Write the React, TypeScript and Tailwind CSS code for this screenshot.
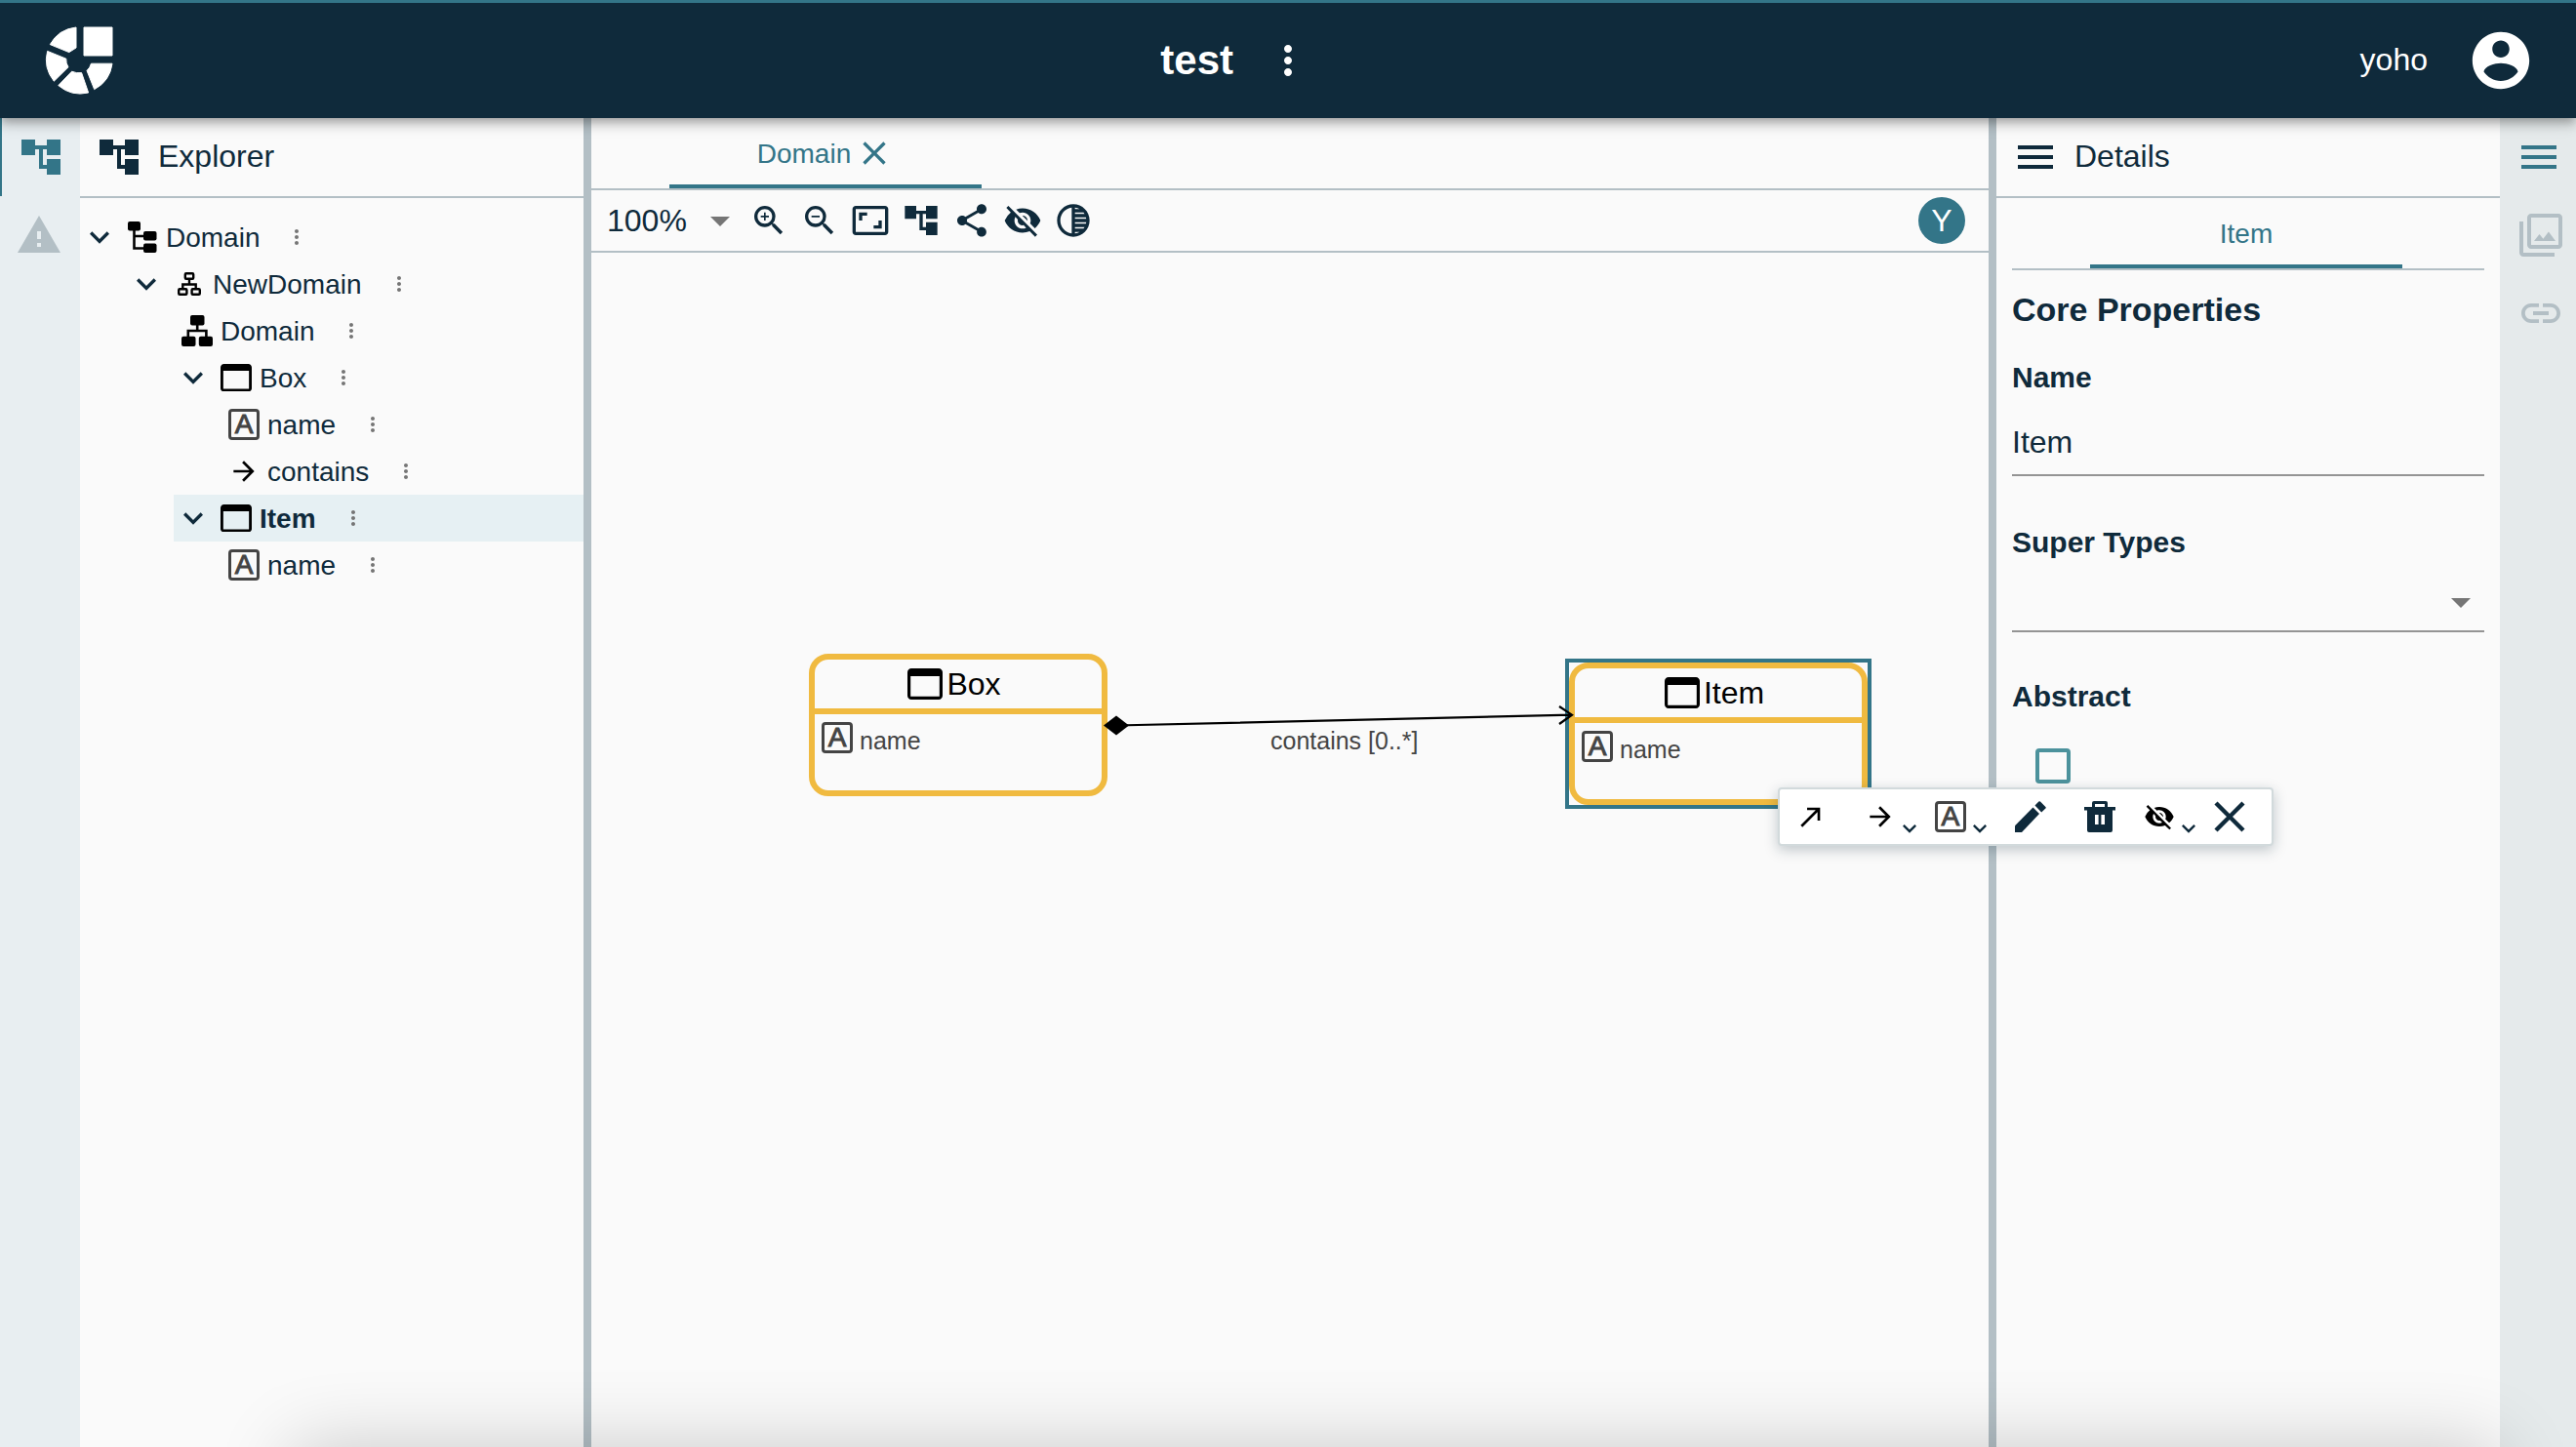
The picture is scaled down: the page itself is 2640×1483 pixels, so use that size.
import type { ReactNode } from "react";
import {
  MdAccountTree,
  MdArrowDropDown,
  MdArrowForward,
  MdAspectRatio,
  MdClose,
  MdExpandMore,
  MdLink,
  MdMenu,
  MdMoreVert,
  MdNorthEast,
  MdOutlineFilter,
  MdShare,
  MdTonality,
  MdVisibilityOff,
  MdWarning,
  MdZoomIn,
  MdZoomOut,
} from "react-icons/md";

function Logo() {
  return (
    <svg viewBox="0 0 70 70" className="size-[70px]" fill="#fff" stroke="#fff" strokeWidth="1" strokeLinejoin="round" aria-hidden="true">
      <path d="M40 1H69V30H40Z" />
      <path d="M32 1V22L24.8 26.6L5.3 18.6A35 35 0 0 1 32 1Z" />
      <path d="M2.6 25.4L21.8 33.2Q21.4 38 24 41.8L9.3 56.2A35 35 0 0 1 2.6 25.4Z" />
      <path d="M27.6 46.2Q32.4 48.4 37.6 47.6L44.6 68A35 35 0 0 1 13.8 60.6Z" />
      <path d="M47.4 38.2H69A35 35 0 0 1 50.7 64.6L43 45.4Q46.4 42.4 47.4 38.2Z" />
    </svg>
  );
}

function AccountIcon() {
  return (
    <svg viewBox="0 0 24 24" className="size-[70px]" fill="currentColor" aria-hidden="true">
      <path d="M12 2C6.48 2 2 6.48 2 12s4.48 10 10 10 10-4.48 10-10S17.52 2 12 2zm0 3c1.66 0 3 1.34 3 3s-1.34 3-3 3-3-1.34-3-3 1.34-3 3-3zm0 14.2c-2.5 0-4.71-1.28-6-3.22.03-1.99 4-3.08 6-3.08 1.99 0 5.97 1.09 6 3.08-1.29 1.94-3.5 3.22-6 3.22z" />
    </svg>
  );
}

function RootIcon() {
  return (
    <svg viewBox="0 0 32 32" className="size-8" aria-hidden="true">
      <rect x="1" y="0" width="13" height="9.5" rx="2" />
      <rect x="17" y="10" width="13.5" height="9.5" rx="2" />
      <rect x="17" y="22.5" width="13.5" height="9.5" rx="2" />
      <path d="M7.5 8V27.5H18M7.5 15H18" fill="none" stroke="#000" strokeWidth="2.6" />
    </svg>
  );
}

function ModelIcon() {
  return (
    <span className="flex size-8 items-center justify-center">
      <svg viewBox="0 0 24 24" className="size-6" fill="none" stroke="#000" strokeWidth="2.4" aria-hidden="true">
        <rect x="7.8" y="1.2" width="8.4" height="5.6" rx="1" />
        <rect x="1.2" y="17.2" width="8.2" height="5.6" rx="1" />
        <rect x="14.6" y="17.2" width="8.2" height="5.6" rx="1" />
        <path d="M12 7v5M5.3 17v-4.5h13.4V17" />
      </svg>
    </span>
  );
}

function DiagramIcon() {
  return (
    <svg viewBox="0 0 32 32" className="size-8" aria-hidden="true">
      <rect x="9" y="0" width="14.5" height="10.5" rx="2" />
      <rect x="0" y="21.8" width="14.5" height="10.2" rx="2" />
      <rect x="17.8" y="21.8" width="14.2" height="10.2" rx="2" />
      <path d="M16.2 10v6M6.8 22v-6h18.6v6" fill="none" stroke="#000" strokeWidth="2.6" />
    </svg>
  );
}

function EntityIcon({ className }: { className: string }) {
  return (
    <svg viewBox="3 4 18 16" className={className} aria-hidden="true">
      <path d="M19 4H5c-1.11 0-2 .9-2 2v12c0 1.1.89 2 2 2h14c1.1 0 2-.9 2-2V6c0-1.1-.9-2-2-2zm0 14.4H4.6V8h14.8v10.4z" />
    </svg>
  );
}

function AttributeIcon() {
  return (
    <span className="flex size-8 shrink-0 items-center justify-center rounded-[4px] border-3 border-[#444] text-[28px] leading-none font-normal text-[#444] [-webkit-text-stroke:1px_#444]" aria-hidden="true">
      A
    </span>
  );
}

function PencilIcon() {
  return (
    <svg viewBox="0 0 32 32" className="size-8" fill="currentColor" aria-hidden="true">
      <path d="M0 25.2V32H7L25 13L18.5 6.5Z" />
      <path d="M20.5 4.6L24.4 0.6Q25.2 -0.2 26 0.6L31.4 6Q32.2 6.8 31.4 7.6L27.2 11.4Z" />
    </svg>
  );
}

function TrashIcon() {
  return (
    <svg viewBox="0 0 32 32" className="size-8" fill="currentColor" fillRule="evenodd" aria-hidden="true">
      <path d="M8 6V2Q8 0 10 0H22Q24 0 24 2V6H32V9.4H29V30Q29 32 27 32H5Q3 32 3 30V9.4H0V6ZM11 6H21V3H11ZM11 14V24H14.6V14ZM17.4 14V24H21V14Z" />
    </svg>
  );
}

function CrossIcon() {
  return (
    <svg viewBox="0 0 32 32" className="size-8" stroke="currentColor" strokeWidth="4.4" aria-hidden="true">
      <path d="M2 2L30 30M30 2L2 30" />
    </svg>
  );
}

type Row = { label: string; depth: string; icon: ReactNode; open?: boolean; selected?: boolean };

const rows: Row[] = [
  { label: "Domain", depth: "ml-0", icon: <RootIcon />, open: true },
  { label: "NewDomain", depth: "ml-12", icon: <ModelIcon />, open: true },
  { label: "Domain", depth: "ml-24", icon: <DiagramIcon /> },
  { label: "Box", depth: "ml-24", icon: <EntityIcon className="w-8" />, open: true },
  { label: "name", depth: "ml-36", icon: <AttributeIcon /> },
  { label: "contains", depth: "ml-36", icon: <MdArrowForward className="size-8 text-black" /> },
  { label: "Item", depth: "ml-24", icon: <EntityIcon className="w-8" />, open: true, selected: true },
  { label: "name", depth: "ml-36", icon: <AttributeIcon /> },
];

function TreeRow({ row }: { row: Row }) {
  return (
    <li className={`${row.depth} flex h-12 items-center ${row.selected ? "bg-[#e6f0f3] font-bold" : ""}`}>
      {row.open ? (
        <button type="button" aria-label={`Collapse ${row.label}`} className="mr-2">
          <MdExpandMore className="size-10" />
        </button>
      ) : (
        <span className="w-2" />
      )}
      {row.icon}
      <span className="ml-2 text-[28px]">{row.label}</span>
      <button type="button" aria-label={`More actions for ${row.label}`} className="ml-[26px] text-[#757575]">
        <MdMoreVert className="size-6" />
      </button>
    </li>
  );
}

function PanelHeader({ icon, title }: { icon: ReactNode; title: string }) {
  return (
    <div className="flex h-[82px] items-center gap-4 border-b-2 border-[#b3bfc5] px-4">
      {icon}
      <h2 className="pb-0.5 text-[32px]">{title}</h2>
    </div>
  );
}

function EntityNode({ title }: { title: string }) {
  return (
    <div className="h-[146px] w-[306px] rounded-[20px] border-6 border-[#f0ba40] bg-[#fafafa]">
      <div className="flex h-14 items-center justify-center gap-1 border-b-6 border-[#f0ba40] pr-2 text-[32px] text-black">
        <EntityIcon className="w-9" />
        {title}
      </div>
      <div className="flex items-end gap-[7px] pt-2 pl-[7px] text-[25px] leading-[25px] text-[#444]">
        <AttributeIcon />
        name
      </div>
    </div>
  );
}

function PaletteButton({ label, more, className, children }: { label: string; more?: boolean; className?: string; children: ReactNode }) {
  return (
    <button type="button" aria-label={label} className={`flex h-full w-[60px] items-center ${className ?? ""}`}>
      {children}
      {more && <MdExpandMore className="mt-6 size-7 text-[#0f2a3b]" />}
    </button>
  );
}

const tools = [
  { label: "Zoom in", icon: MdZoomIn },
  { label: "Zoom out", icon: MdZoomOut },
  { label: "Fit to screen", icon: MdAspectRatio },
  { label: "Arrange all", icon: MdAccountTree },
  { label: "Share", icon: MdShare },
  { label: "Reveal hidden elements", icon: MdVisibilityOff },
  { label: "Reveal faded elements", icon: MdTonality },
];

export default function App() {
  return (
    <div className="relative flex h-screen flex-col overflow-hidden bg-[#fafafa] font-['Liberation_Sans',Arial,sans-serif] leading-tight text-[#0f2a3b]">
      <header className="relative z-10 grid h-[121px] shrink-0 grid-cols-[1fr_auto_1fr] items-center border-t-3 border-[#337588] bg-[#0f2a3b] text-white shadow-[0_4px_8px_-2px_rgba(0,0,0,0.2),0_8px_10px_rgba(0,0,0,0.14),0_2px_20px_rgba(0,0,0,0.12)]">
        <div className="flex items-center justify-between pr-8 pl-[46px]">
          <a href="#" aria-label="Home">
            <Logo />
          </a>
          <h1 className="text-[42px] font-bold">test</h1>
        </div>
        <button type="button" aria-label="Project actions">
          <MdMoreVert className="size-12" />
        </button>
        <div className="flex items-center justify-end gap-10 pr-[42px]">
          <span className="pb-0.5 text-[32px]">yoho</span>
          <button type="button" aria-label="Account">
            <AccountIcon />
          </button>
        </div>
      </header>

      <div className="flex min-h-0 flex-1">
        <nav className="flex w-[82px] shrink-0 flex-col items-start bg-[#e8eef1] text-[#b3bfc5]" aria-label="Left panels">
          <button type="button" aria-label="Explorer" className="flex h-20 w-[82px] items-center justify-center border-l-2 border-[#337588] text-[#337588]">
            <MdAccountTree className="size-12" />
          </button>
          <button type="button" aria-label="Validation" className="flex size-20 items-center justify-center">
            <MdWarning className="size-12" />
          </button>
        </nav>

        <aside className="w-[516px] shrink-0">
          <PanelHeader icon={<MdAccountTree className="size-12" />} title="Explorer" />
          <ul className="pt-4">
            {rows.map((row, i) => (
              <TreeRow key={i} row={row} />
            ))}
          </ul>
        </aside>

        <div className="w-2 shrink-0 bg-[#b3bfc5]" />

        <main className="flex min-w-0 flex-1 flex-col">
          <div className="flex h-[74px] shrink-0 border-b-2 border-[#b3bfc5] pl-20">
            <div className="flex w-80 items-center justify-center gap-1 border-b-4 border-[#337588] pt-1 text-[28px] text-[#337588]">
              <button type="button">Domain</button>
              <button type="button" aria-label="Close Domain">
                <MdClose className="size-10" />
              </button>
            </div>
          </div>
          <div className="flex h-16 shrink-0 items-center gap-[6px] border-b-2 border-[#b3bfc5] pr-6 pl-4">
            <div className="relative">
              <select aria-label="Zoom level" className="h-12 w-[140px] appearance-none bg-transparent text-[32px] outline-none">
                <option>100%</option>
              </select>
              <MdArrowDropDown className="pointer-events-none absolute top-0 right-0 size-12 text-[#757575]" />
            </div>
            <div className="flex gap-3">
              {tools.map(({ label, icon: Icon }) => (
                <button key={label} type="button" aria-label={label}>
                  <Icon className="size-10" />
                </button>
              ))}
            </div>
            <span className="ml-auto flex size-12 items-center justify-center rounded-full bg-[#337588] text-[32px] text-white">Y</span>
          </div>

          <div className="relative flex-1">
            <div className="absolute top-[411px] left-[223px]">
              <EntityNode title="Box" />
            </div>
            <div className="absolute top-[416px] left-[998px] border-4 border-[#337588]">
              <EntityNode title="Item" />
            </div>
            <svg viewBox="0 0 500 40" className="absolute top-[461px] left-[514px] h-10 w-[500px]" fill="none" stroke="#000" strokeWidth="2.2" aria-hidden="true">
              <path d="M24 23.5L491 12.7M478 4L491 12.7L478 22" />
              <path d="M11 23.5L24 13.5L37 23.5L24 33.5Z" fill="#000" stroke="none" />
            </svg>
            <span className="absolute top-[485px] left-[696px] text-[25px] whitespace-nowrap text-[#444]">contains [0..*]</span>
            <div className="absolute top-[548px] left-[1216px] z-20 flex h-[60px] w-[508px] gap-3 rounded-[4px] border-2 border-[#d2dadc] bg-white pl-4 text-black shadow-[0_4px_14px_rgba(15,42,59,0.25)]">
              <PaletteButton label="New super type">
                <MdNorthEast className="size-8" />
              </PaletteButton>
              <PaletteButton label="New relation" more>
                <MdArrowForward className="size-8" />
              </PaletteButton>
              <PaletteButton label="New attribute" more>
                <AttributeIcon />
              </PaletteButton>
              <PaletteButton label="Edit" className="pl-2.5 text-[#0f2a3b]">
                <PencilIcon />
              </PaletteButton>
              <PaletteButton label="Delete" className="pl-2.5 text-[#0f2a3b]">
                <TrashIcon />
              </PaletteButton>
              <PaletteButton label="Hide" more>
                <MdVisibilityOff className="size-8" />
              </PaletteButton>
              <PaletteButton label="Close palette" className="text-[#0f2a3b]">
                <CrossIcon />
              </PaletteButton>
            </div>
          </div>
        </main>

        <div className="w-2 shrink-0 bg-[#b3bfc5]" />

        <aside className="w-[516px] shrink-0">
          <PanelHeader icon={<MdMenu className="size-12" />} title="Details" />
          <div className="px-4">
            <div className="flex h-[74px] border-b-2 border-[#b3bfc5] pl-20">
              <button type="button" className="w-80 border-b-4 border-[#337588] pt-1 text-[28px] text-[#337588]">
                Item
              </button>
            </div>
            <h3 className="mt-5 text-[34px] leading-10 font-bold">Core Properties</h3>
            <label htmlFor="name" className="mt-8 block text-[30px] leading-9 font-bold">
              Name
            </label>
            <input id="name" defaultValue="Item" className="mt-[15px] h-[68px] w-full border-b-2 border-[#949494] bg-transparent text-[32px] outline-none" />
            <label htmlFor="super-types" className="mt-[50px] block text-[30px] leading-9 font-bold">
              Super Types
            </label>
            <div className="relative mt-[14px]">
              <select id="super-types" className="block h-[60px] w-full appearance-none border-b-2 border-[#949494] bg-transparent text-[32px] outline-none">
                <option></option>
              </select>
              <MdArrowDropDown className="pointer-events-none absolute top-[5px] right-0 size-12 text-[#757575]" />
            </div>
            <label htmlFor="abstract" className="mt-12 block text-[30px] leading-9 font-bold">
              Abstract
            </label>
            <input id="abstract" type="checkbox" className="mt-[35px] ml-6 block size-9 appearance-none rounded-[4px] border-4 border-[#4c929c]" />
          </div>
        </aside>

        <nav className="flex w-[78px] shrink-0 flex-col items-start overflow-hidden bg-[#e5eaeb] text-[#b3bfc5]" aria-label="Right panels">
          <button type="button" aria-label="Details" className="flex size-20 items-center justify-center text-[#337588]">
            <MdMenu className="size-12" />
          </button>
          <button type="button" aria-label="Representations" className="flex h-20 w-[84px] items-center justify-center">
            <MdOutlineFilter className="size-12" />
          </button>
          <button type="button" aria-label="Related elements" className="flex h-20 w-[84px] items-center justify-center">
            <MdLink className="size-12" />
          </button>
        </nav>
      </div>

      <div className="pointer-events-none absolute top-full right-20 left-[300px] h-40 shadow-[0_0_80px_rgba(0,0,0,0.2)]" />
    </div>
  );
}
